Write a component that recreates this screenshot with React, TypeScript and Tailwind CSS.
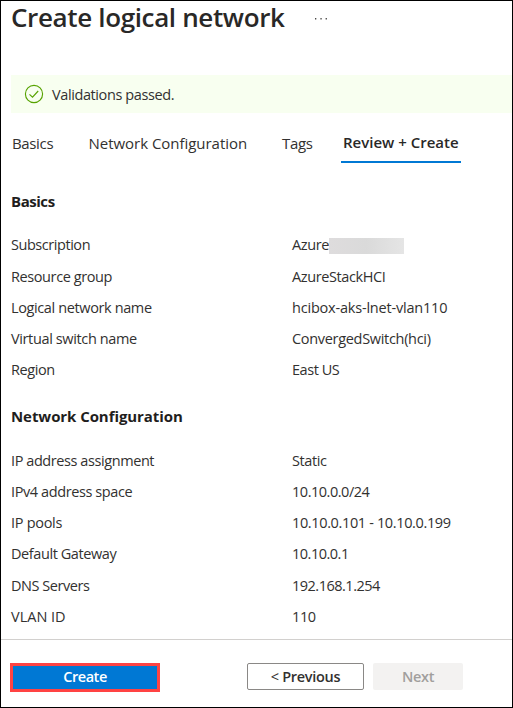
type Row = { label: string; value: string; labelClass: string; valueClass: string; masked?: boolean };

const basics: Row[] = [
  { label: "Subscription", value: "Azure", labelClass: "tracking-[-0.45px]", valueClass: "tracking-[-0.4px]", masked: true },
  { label: "Resource group", value: "AzureStackHCI", labelClass: "tracking-[-0.4px]", valueClass: "tracking-[-0.4px]" },
  { label: "Logical network name", value: "hcibox-aks-lnet-vlan110", labelClass: "tracking-[-0.38px]", valueClass: "tracking-[-0.2px]" },
  { label: "Virtual switch name", value: "ConvergedSwitch(hci)", labelClass: "tracking-[-0.37px]", valueClass: "tracking-[-0.31px]" },
  { label: "Region", value: "East US", labelClass: "tracking-[-0.4px]", valueClass: "tracking-[-0.45px]" },
];

const network: Row[] = [
  { label: "IP address assignment", value: "Static", labelClass: "tracking-[-0.42px]", valueClass: "tracking-[-0.4px]" },
  { label: "IPv4 address space", value: "10.10.0.0/24", labelClass: "tracking-[-0.4px]", valueClass: "tracking-[-0.47px]" },
  { label: "IP pools", value: "10.10.0.101 - 10.10.0.199", labelClass: "tracking-[-0.3px]", valueClass: "tracking-[-0.36px]" },
  { label: "Default Gateway", value: "10.10.0.1", labelClass: "tracking-[-0.42px]", valueClass: "tracking-[-0.5px]" },
  { label: "DNS Servers", value: "192.168.1.254", labelClass: "tracking-[-0.45px]", valueClass: "tracking-[-0.5px]" },
  { label: "VLAN ID", value: "110", labelClass: "tracking-[0px]", valueClass: "tracking-[-0.4px]" },
];

function Rows({ rows }: { rows: Row[] }) {
  return (
    <dl>
      {rows.map((r) => (
        <div key={r.label} className="flex h-[31.25px] items-center whitespace-nowrap">
          <dt className="w-[281px] shrink-0"><span className={r.labelClass}>{r.label}</span></dt>
          <dd className="flex items-center">
            <span className={r.valueClass}>{r.value}</span>
            {r.masked && <span className="mt-px h-4 w-[75px] bg-linear-to-r from-[#dedcdd] via-[#dadada] to-[#e5e5e5]" />}
          </dd>
        </div>
      ))}
    </dl>
  );
}

export default function App() {
  return (
    <main className="flex h-[708px] w-[513px] flex-col overflow-hidden border border-black bg-white font-['Open_Sans',sans-serif] text-[14.5px] leading-5 text-[#323130]">
      <header className="flex h-[74px] shrink-0 items-start pl-[10px] whitespace-nowrap">
        <h1 className="w-[304px] text-[26px] leading-[32px] font-semibold tracking-[-0.36px] text-[#292827]">Create logical network</h1>
        <svg className="mt-[17px]" width="13" height="2" fill="#4a4948">
          <rect width="1.3" height="1.5" />
          <rect x="5.4" width="1.3" height="1.5" />
          <rect x="10.6" width="1.3" height="1.5" />
        </svg>
      </header>
      <div className="ml-[10px] flex h-[38px] shrink-0 items-center bg-[#f8fff0] pl-[13px]">
        <svg width="20" height="20" viewBox="0 0 20 20" fill="none" stroke="#57a300" strokeWidth="1.15">
          <circle cx="10" cy="10" r="8.6" />
          <path d="M5.5 10.3 8.5 13.1 14.2 7" />
        </svg>
        <span className="ml-[8px] pt-[2px] tracking-[-0.4px]">Validations passed.</span>
      </div>
      <nav className="flex h-[50px] shrink-0 items-end pl-[11px] text-[15px] whitespace-nowrap">
        <span className="w-[76.5px] pb-[10px] tracking-[-0.35px]">Basics</span>
        <span className="w-[193.5px] pb-[10px] tracking-[-0.03px]">Network Configuration</span>
        <span className="w-[59px] pb-[10px] tracking-[-0.3px]">Tags</span>
        <span className="w-[120px] border-b-2 border-[#0078d4] pb-[9px] pl-[2px] font-semibold tracking-[0px] text-[#292827]">Review + Create</span>
      </nav>
      <section className="pt-[28px] pl-[10px]">
        <h2 className="mb-[18.8px] text-[15px] font-bold text-[#1f1e1d]"><span className="tracking-[-0.45px]">Basics</span></h2>
        <Rows rows={basics} />
      </section>
      <section className="pt-[19.5px] pl-[10px]">
        <h2 className="mb-[19.4px] text-[15px] font-bold text-[#1f1e1d]"><span className="tracking-[-0.07px]">Network Configuration</span></h2>
        <Rows rows={network} />
      </section>
      <footer className="mt-auto flex h-[68px] shrink-0 items-start border-t border-[#d2d0ce] pt-[23px] pl-[9px]">
        <button className="h-[29px] w-[150px] border-[3px] border-[#ff4343] bg-[#0078d4] pb-[2px] font-semibold tracking-[-0.45px] text-white">Create</button>
        <button className="ml-[87px] h-[27px] w-[117px] rounded-[2px] border border-[#8a8886] font-semibold tracking-[-0.3px]"><span className="font-normal">&lt;</span> Previous</button>
        <button className="ml-[9px] h-[27px] w-[90px] rounded-[2px] bg-[#f3f2f1] font-semibold tracking-[-0.3px] text-[#a19f9d]">Next</button>
      </footer>
    </main>
  );
}
